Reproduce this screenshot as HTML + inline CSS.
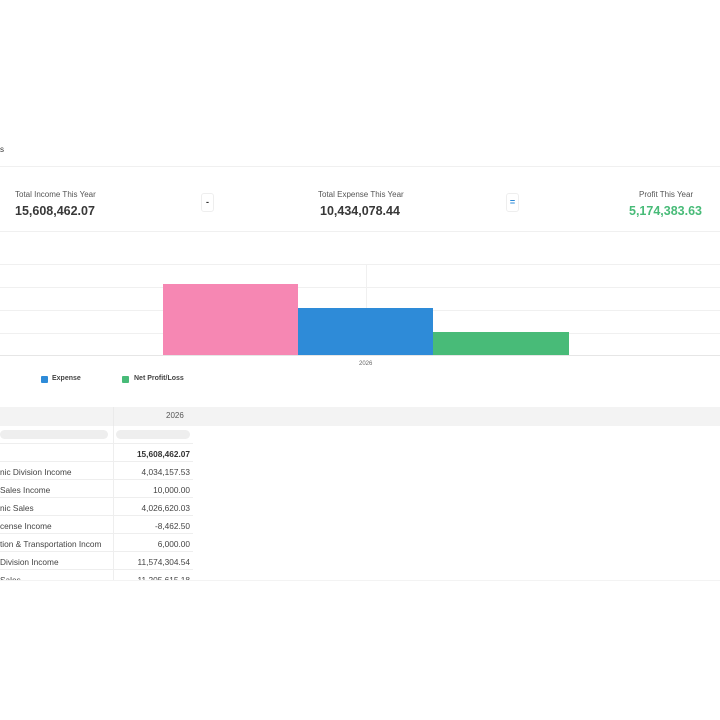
<!DOCTYPE html>
<html><head><style>
*{margin:0;padding:0;box-sizing:border-box}
body{width:720px;height:720px;background:#fff;font-family:"Liberation Sans",sans-serif;position:relative;overflow:hidden;color:#333}
.a{position:absolute}
.hl{position:absolute;left:0;width:720px;height:1px;background:#f0f0f0}
.lbl{font-size:8px;color:#555}
.val{font-size:12.5px;font-weight:bold;color:#383838}
.btn{position:absolute;width:13px;height:19px;border:1px solid #eee;border-radius:3px;background:#fff;font-size:9px;text-align:center;line-height:17px;font-weight:bold}
.row{position:absolute;left:0;width:193px;height:18px;border-bottom:1px solid #eee;font-size:8.3px;color:#444}
.row .l{position:absolute;left:0;top:5px;white-space:nowrap}
.row .r{position:absolute;right:3px;top:5px}
.row:after{content:"";position:absolute;left:113px;top:0;bottom:0;width:1px;background:#eee}
</style></head><body>
<div class="a" style="left:0;top:145px;font-size:8px">s</div>
<div class="hl" style="top:166px"></div>
<div class="a lbl" style="left:15px;top:190px">Total Income This Year</div>
<div class="a val" style="left:15px;top:204px">15,608,462.07</div>
<div class="btn" style="left:201px;top:193px">-</div>
<div class="a lbl" style="left:318px;top:190px">Total Expense This Year</div>
<div class="a val" style="left:320px;top:204px">10,434,078.44</div>
<div class="btn" style="left:506px;top:193px;color:#2e8bd8">=</div>
<div class="a lbl" style="left:639px;top:190px">Profit This Year</div>
<div class="a val" style="left:629px;top:204px;color:#48bb78">5,174,383.63</div>
<div class="hl" style="top:231px"></div>
<div class="hl" style="top:264px"></div>
<div class="hl" style="top:287px"></div>
<div class="hl" style="top:310px"></div>
<div class="hl" style="top:333px"></div>
<div class="hl" style="top:355px;background:#e6e6e6"></div>
<div class="a" style="left:366px;top:264px;width:1px;height:91px;background:#f0f0f0"></div>
<div class="a" style="left:163px;top:284px;width:135px;height:71px;background:#f687b3"></div>
<div class="a" style="left:298px;top:308px;width:135px;height:47px;background:#2e8bd8"></div>
<div class="a" style="left:433px;top:332px;width:136px;height:23px;background:#48bb78"></div>
<div class="a" style="left:359px;top:361px;font-size:6px;color:#666">2026</div>
<div class="a" style="left:41px;top:376px;width:7px;height:7px;background:#2e8bd8;border-radius:1px"></div>
<div class="a" style="left:52px;top:375px;font-size:7px;font-weight:bold;color:#444">Expense</div>
<div class="a" style="left:122px;top:376px;width:7px;height:7px;background:#48bb78;border-radius:1px"></div>
<div class="a" style="left:134px;top:375px;font-size:7px;font-weight:bold;color:#444">Net Profit/Loss</div>
<div class="a" style="left:0;top:407px;width:720px;height:19px;background:#f3f3f3"></div>
<div class="a" style="left:113px;top:407px;width:1px;height:19px;background:#eaeaea"></div>
<div class="a" style="left:166px;top:411px;font-size:8px;color:#555">2026</div>
<div class="row" style="top:426px"><div class="a" style="left:0;top:4px;width:108px;height:9px;background:#eee;border-radius:5px"></div><div class="a" style="left:116px;top:4px;width:74px;height:9px;background:#eee;border-radius:5px"></div></div>
<div class="row" style="top:444px"><div class="r" style="font-weight:bold;color:#333">15,608,462.07</div></div>
<div class="row" style="top:462px"><div class="l">nic Division Income</div><div class="r">4,034,157.53</div></div>
<div class="row" style="top:480px"><div class="l">Sales Income</div><div class="r">10,000.00</div></div>
<div class="row" style="top:498px"><div class="l">nic Sales</div><div class="r">4,026,620.03</div></div>
<div class="row" style="top:516px"><div class="l">cense Income</div><div class="r">-8,462.50</div></div>
<div class="row" style="top:534px"><div class="l">tion &amp; Transportation Incom</div><div class="r">6,000.00</div></div>
<div class="row" style="top:552px"><div class="l">Division Income</div><div class="r">11,574,304.54</div></div>
<div class="row" style="top:570px"><div class="l">Sales</div><div class="r">11,205,615.18</div></div>
<div class="a" style="left:0;top:580px;width:720px;height:140px;background:#fff;border-top:1px solid #f3f3f3"></div>
</body></html>
